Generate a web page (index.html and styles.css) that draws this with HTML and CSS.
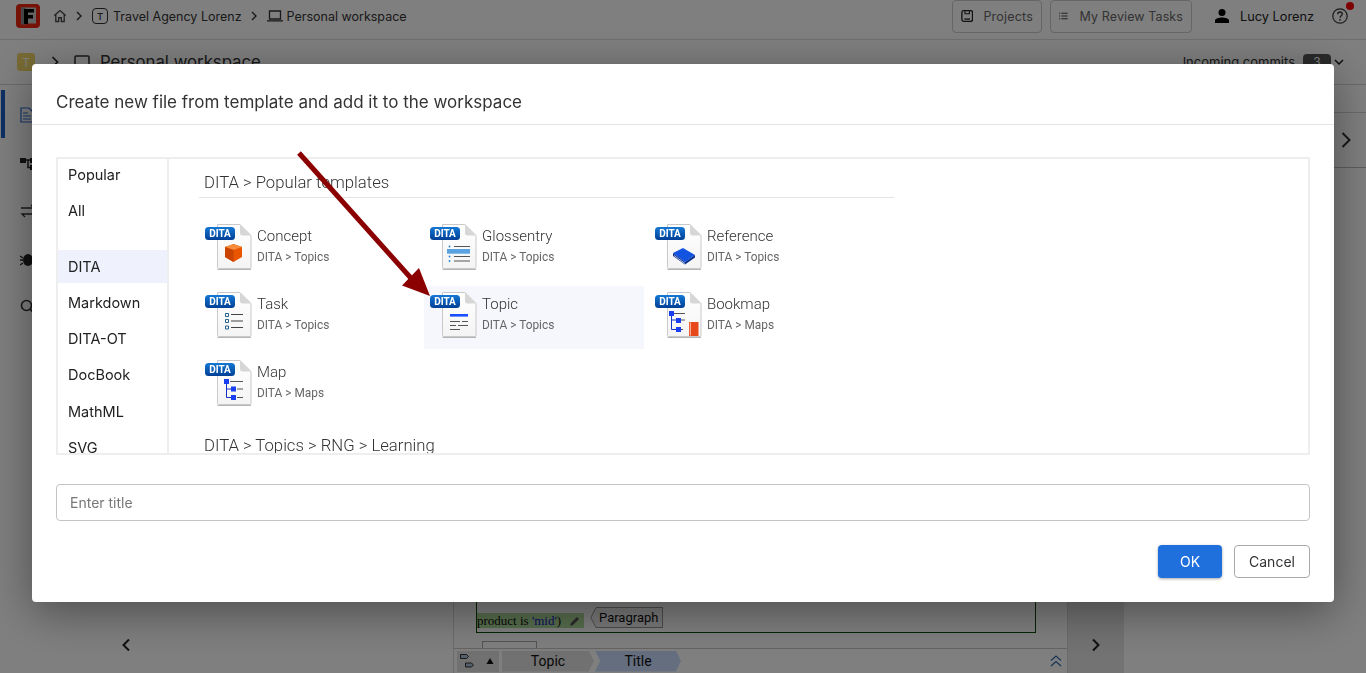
FILE: index.html
```html
<!DOCTYPE html>
<html lang="en">
<head>
<meta charset="utf-8">
<title>Create new file from template</title>
<link rel="stylesheet" href="styles.css">
</head>
<body>
<svg class="defs" aria-hidden="true">
  <defs>
    <linearGradient id="badge" x1="0" y1="0" x2="0" y2="1">
      <stop offset="0" stop-color="#1478d4"/>
      <stop offset="1" stop-color="#003f96"/>
    </linearGradient>
    <linearGradient id="page" x1="0" y1="0" x2="0" y2="1">
      <stop offset="0" stop-color="#ffffff"/>
      <stop offset="1" stop-color="#f4f4f4"/>
    </linearGradient>
    <symbol id="doc" viewBox="0 0 47 47">
      <path d="M12.500 .5H35L46 11.500V43.500Q46 44.500 45 44.500H13.500Q12.500 44.500 12.500 43.500Z" fill="url(#page)" stroke="#c9c9c9"/>
      <path d="M12.500 45.500H46" stroke="#b5b5b5" stroke-width="1"/>
      <path d="M35 .5L46 11.500H37.500Q35 11.500 35 9Z" fill="#d6d6d6"/>
      <rect x="0" y="3" width="30" height="13" rx="3.500" fill="url(#badge)"/>
      <text x="15" y="13.200" class="dita">DITA</text>
    </symbol>
  </defs>
</svg>

<div class="app">
  <header class="topbar">
    <svg class="logo" viewBox="0 0 24 24" width="24" height="24">
      <rect width="24" height="24" rx="4" fill="#ee2410"/>
      <rect x="5" y="3.500" width="15" height="16" fill="#c8c8c8"/>
      <rect x="5" y="3.500" width="5" height="17" fill="#8a8a8a"/>
      <path d="M8 5H18V8.500H12V11H17V14.500H12V20H8Z" fill="#000"/>
    </svg>
    <svg class="ico home" viewBox="0 0 16 16" width="14" height="16"><path d="M1.500 7.500L8 1.800l6.500 5.700M3.200 6.500v7.800h3.300V10h3v4.300h3.300V6.500" fill="none" stroke="#444" stroke-width="1.500"/></svg>
    <svg class="chev" viewBox="0 0 8 10" width="8" height="10"><path d="M2 1l4 4-4 4" fill="none" stroke="#333" stroke-width="1.400"/></svg>
    <span class="tbox">T</span>
    <span class="crumb">Travel Agency Lorenz</span>
    <svg class="chev" viewBox="0 0 8 10" width="8" height="10"><path d="M2 1l4 4-4 4" fill="none" stroke="#333" stroke-width="1.400"/></svg>
    <svg class="ico laptop" viewBox="0 0 16 12" width="16" height="12"><path d="M2.500 1h11v8h-11z" fill="none" stroke="#333" stroke-width="1.300"/><path d="M0 10.200h16v1.300H0z" fill="#333"/></svg>
    <span class="crumb">Personal workspace</span>
    <div class="spring"></div>
    <div class="topbtn btn-projects">
      <svg viewBox="0 0 14 14" width="14" height="14"><rect x="1" y="1" width="12" height="12" rx="2" fill="none" stroke="#222" stroke-width="1.500"/><path d="M4.500 1v3.500h5V1M4.500 9.500v1h5v-1" fill="none" stroke="#222" stroke-width="1.200"/></svg>
      <span>Projects</span>
    </div>
    <div class="topbtn btn-tasks">
      <svg viewBox="0 0 14 12" width="13" height="12"><path d="M0 1.500h2M0 6h2M0 10.500h2M4 1.500h10M4 6h10M4 10.500h10" stroke="#333" stroke-width="1.500"/></svg>
      <span>My Review Tasks</span>
    </div>
    <svg class="user" viewBox="0 0 14 14" width="14" height="14"><circle cx="7" cy="3.500" r="3.500" fill="#000"/><path d="M0 14v-2.500C0 9.500 4 8.500 7 8.500s7 1 7 3V14z" fill="#000"/></svg>
    <span class="username">Lucy Lorenz</span>
    <div class="help">
      <svg viewBox="0 0 16 16" width="16" height="16"><circle cx="8" cy="8" r="7.200" fill="none" stroke="#333" stroke-width="1.200"/><path d="M5.800 6.200C5.800 4.800 6.800 4 8 4s2.300.8 2.300 2.100C10.300 7.800 8 7.800 8 9.700" fill="none" stroke="#333" stroke-width="1.300"/><circle cx="8" cy="11.800" r=".9" fill="#333"/></svg>
      <i class="dot"></i>
    </div>
  </header>

  <div class="subbar">
    <span class="tsquare">T</span>
    <svg class="subchev" viewBox="0 0 8 12" width="8" height="12"><path d="M1.500 1l5 5-5 5" fill="none" stroke="#222" stroke-width="1.600"/></svg>
    <svg class="monitor" viewBox="0 0 16 14" width="16" height="14"><rect x="1" y="1" width="14" height="10" rx="1" fill="none" stroke="#333" stroke-width="1.500"/></svg>
    <span class="subtitle">Personal workspace</span>
    <div class="spring"></div>
    <span class="commits">Incoming commits</span>
    <span class="count">3</span>
    <svg class="cchev" viewBox="0 0 10 6" width="10" height="6"><path d="M1 1l4 4 4-4" fill="none" stroke="#111" stroke-width="1.400"/></svg>
  </div>

  <div class="work">
    <nav class="rail">
      <i class="accent"></i>
      <svg class="rail-ico" viewBox="0 0 14 16" width="14" height="16"><path d="M1 1h8l4 4v10H1zM3 6h5M3 9h8M3 12h8" fill="none" stroke="#2a6cd6" stroke-width="1.200"/></svg>
      <svg class="rail-ico" viewBox="0 0 16 16" width="16" height="16"><path d="M0 3h6v5H0zM10 3h6v5h-6zM10 10h6v5h-6z" fill="#222"/><path d="M6 5h4M8 5v7.500h2" stroke="#222" stroke-width="1.500" fill="none"/></svg>
      <svg class="rail-ico" viewBox="0 0 16 16" width="16" height="16"><path d="M1 5h13l-3-3M15 11H2l3 3" fill="none" stroke="#333" stroke-width="1.300"/></svg>
      <svg class="rail-ico" viewBox="0 0 16 16" width="16" height="16"><ellipse cx="8" cy="9" rx="5" ry="6" fill="#222"/><path d="M0 5l3 2M16 5l-3 2M0 9h3M16 9h-3M0 14l3-2M16 14l-3-2" stroke="#222" stroke-width="1.400"/></svg>
      <svg class="rail-ico" viewBox="0 0 16 16" width="16" height="16"><circle cx="6.500" cy="6.500" r="5" fill="none" stroke="#333" stroke-width="1.600"/><path d="M10 10l5 5" stroke="#333" stroke-width="1.800"/></svg>
    </nav>
    <aside class="leftpanel">
      <svg viewBox="0 0 10 14" width="10" height="14"><path d="M8 1.500L2.500 7 8 12.500" fill="none" stroke="#222" stroke-width="2"/></svg>
    </aside>
    <div class="gap"></div>
    <section class="editor">
      <div class="editor-body">
        <div class="green-box">
          <div class="para-row">
            <span class="condition"><span class="cond-text">product is <b>'mid'</b>)</span><svg viewBox="0 0 12 12" width="12" height="12"><path d="M1 11l1-3 6-6 2 2-6 6z" fill="#555"/></svg></span>
            <span class="tag"><svg viewBox="0 0 7 21" width="7" height="21"><path d="M7 .5H6L.8 10.500 6 20.500H7" fill="#f2f2f2" stroke="#999"/></svg><span class="tag-label">Paragraph</span></span>
          </div>
        </div>
        <i class="tag2"></i>
      </div>
      <div class="crumbs">
        <div class="crumb-tools">
          <svg viewBox="0 0 20 14" width="20" height="14"><path d="M.500 .5h6l2 2-2 2h-6zM5.500 9h6l2 2-2 2h-6z" fill="#a7c0d8" stroke="#333"/></svg>
          <svg viewBox="0 0 8 8" width="8" height="8"><path d="M4 1l3.500 6H.500z" fill="#111"/></svg>
        </div>
        <span class="seg seg-topic">Topic</span>
        <span class="seg seg-title">Title</span>
        <div class="spring"></div>
        <svg class="dchev" viewBox="0 0 12 12" width="12" height="12"><path d="M1 5.500L6 1l5 4.500M1 11l5-4.500 5 4.500" fill="none" stroke="#2f6fa8" stroke-width="1.300"/></svg>
      </div>
    </section>
    <aside class="rightstrip">
      <svg viewBox="0 0 10 14" width="10" height="14"><path d="M2 1.500L7.500 7 2 12.500" fill="none" stroke="#222" stroke-width="2"/></svg>
    </aside>
    <aside class="farpanel">
      <div class="far-head">
        <svg viewBox="0 0 10 16" width="10" height="16"><path d="M1.500 1l7 7-7 7" fill="none" stroke="#333" stroke-width="2"/></svg>
      </div>
    </aside>
  </div>
</div>

<div class="scrim">
  <div class="modal">
    <div class="modal-head">Create new file from template and add it to the workspace</div>
    <div class="modal-body">
      <div class="picker">
        <ul class="cats">
          <li>Popular</li>
          <li class="cat-gap">All</li>
          <li class="selected">DITA</li>
          <li>Markdown</li>
          <li>DITA-OT</li>
          <li>DocBook</li>
          <li class="cat-late">MathML</li>
          <li>SVG</li>
        </ul>
        <div class="templates">
          <h3 class="group">DITA &gt; Popular templates</h3>
          <div class="grid">
            <div class="tpl">
              <svg class="tpl-ico" viewBox="0 0 47 47"><use href="#doc"/>
                <path d="M28.500 20L37 23V33L28.500 38 20 33V23Z" fill="#ea5600"/><path d="M20 23L28.500 20 37 23 28.500 26Z" fill="#f78c3c"/><path d="M28.500 26V38L20 33V23Z" fill="#c84400"/></svg>
              <div class="tpl-text"><b>Concept</b><small>DITA &gt; Topics</small></div>
            </div>
            <div class="tpl">
              <svg class="tpl-ico" viewBox="0 0 47 47"><use href="#doc"/>
                <rect x="17" y="25" width="23" height="4.700" fill="#5ba3e0"/><path d="M24 22.500h16M24 32.500h16M24 37h16" stroke="#555"/><circle cx="19.500" cy="22.500" r=".9" fill="#1f7fd8"/><circle cx="19.500" cy="32.500" r=".9" fill="#1f7fd8"/><circle cx="19.500" cy="37" r=".9" fill="#1f7fd8"/></svg>
              <div class="tpl-text"><b>Glossentry</b><small>DITA &gt; Topics</small></div>
            </div>
            <div class="tpl">
              <svg class="tpl-ico" viewBox="0 0 47 47"><use href="#doc"/>
                <path d="M18 29l10-5 12 7-10 7z" fill="#1254e0"/><path d="M18 29v3l12 8.500 10-7V31l-10 7z" fill="#0a2f8f"/><path d="M19 31.500l11 8" stroke="#d8e4ff" stroke-width=".8"/></svg>
              <div class="tpl-text"><b>Reference</b><small>DITA &gt; Topics</small></div>
            </div>
            <div class="tpl">
              <svg class="tpl-ico" viewBox="0 0 47 47"><use href="#doc"/>
                <path d="M20.500 21.500h3v3h-3zM20.500 27.500h3v3h-3zM20.500 34h3v3h-3z" fill="none" stroke="#24618f"/><path d="M26 22.500h12M26 29h12M26 35.500h12" stroke="#444"/></svg>
              <div class="tpl-text"><b>Task</b><small>DITA &gt; Topics</small></div>
            </div>
            <div class="tpl hovered">
              <svg class="tpl-ico" viewBox="0 0 47 47"><use href="#doc"/>
                <rect x="20" y="22" width="18" height="2.600" fill="#1a4fff"/><path d="M20 29.500h10M32 29.500h6M20 33.500h6M28 33.500h10M20 37.500h10" stroke="#555"/></svg>
              <div class="tpl-text"><b>Topic</b><small>DITA &gt; Topics</small></div>
            </div>
            <div class="tpl">
              <svg class="tpl-ico" viewBox="0 0 47 47"><use href="#doc"/>
                <path d="M16.500 22v15.500H21M16.500 28H21" fill="none" stroke="#1432c8"/><path d="M19 21.500h11M26 28h4M26 37.500h2" stroke="#555"/><rect x="14" y="19" width="5" height="5" fill="#1a3ff0"/><rect x="21" y="26" width="5" height="5" fill="#1a3ff0"/><rect x="21" y="35" width="5" height="5" fill="#1a3ff0"/><rect x="34" y="30" width="9.500" height="14" fill="#e8491a"/><path d="M35.300 30.500V43.500" stroke="#fff" stroke-width=".7"/></svg>
              <div class="tpl-text"><b>Bookmap</b><small>DITA &gt; Maps</small></div>
            </div>
            <div class="tpl">
              <svg class="tpl-ico" viewBox="0 0 47 47"><use href="#doc"/>
                <path d="M21.500 22v15.500H27M21.500 29H27" fill="none" stroke="#1432c8"/><path d="M25 21.500h13M32 29h6M32 37.500h6" stroke="#555"/><rect x="19" y="19" width="5" height="5" fill="#1a3ff0"/><rect x="26" y="26.500" width="5" height="5" fill="#1a3ff0"/><rect x="26" y="35" width="5" height="5" fill="#1a3ff0"/></svg>
              <div class="tpl-text"><b>Map</b><small>DITA &gt; Maps</small></div>
            </div>
          </div>
          <h3 class="group group-next">DITA &gt; Topics &gt; RNG &gt; Learning</h3>
        </div>
      </div>
      <input class="title-input" type="text" placeholder="Enter title">
    </div>
    <div class="modal-foot">
      <button class="btn btn-ok" type="button">OK</button>
      <button class="btn btn-cancel" type="button">Cancel</button>
    </div>
  </div>
  <svg class="arrow" viewBox="0 0 140 150" width="140" height="150"><path d="M2 2L121 135" stroke="#8b0000" stroke-width="5" fill="none"/><path d="M133 145L105 134.500 122 117Z" fill="#8b0000"/></svg>
</div>
</body>
</html>
```
FILE: styles.css
```css
* { box-sizing: border-box; }
html, body { margin: 0; height: 100%; }
body { font-family: Inter, "Liberation Sans", sans-serif; color: #333; background: #fff; overflow: hidden; }
.defs { position: absolute; width: 0; height: 0; }
.dita { font-family: Roboto, "Liberation Sans", sans-serif; font-size: 10px; font-weight: 700; fill: #fff; text-anchor: middle; }

.app { height: 673px; display: flex; flex-direction: column; }
.spring { flex: 1; }

.topbar { height: 40px; flex: none; display: flex; align-items: center; padding: 0 18px 7px 16px; border-bottom: 1px solid #dcdcdc; font-size: 12.500px; }
.logo { flex: none; margin-right: 13px; }
.chev { flex: none; margin: 0 8px; }
.ico { flex: none; }
.tbox { width: 16px; height: 16px; border: 1px solid #333; border-radius: 4px; font-size: 9.500px; font-weight: 500; display: flex; align-items: center; justify-content: center; margin: 0 5px 0 1px; flex: none; }
.laptop { margin: 0 4px 0 1px; }
.crumb { white-space: nowrap; }
.topbtn { height: 33px; border: 1px solid #ccc; border-radius: 4px; display: flex; align-items: center; gap: 10px; padding: 0 8px; color: #666; letter-spacing: .2px; white-space: nowrap; }
.btn-projects { width: 90px; }
.btn-tasks { width: 142px; margin-left: 8px; gap: 12px; letter-spacing: .1px; }
.user { margin-left: 23px; }
.username { margin-left: 11px; color: #222; white-space: nowrap; font-size: 12.750px; }
.help { margin-left: 18px; position: relative; width: 16px; height: 16px; }
.help svg { display: block; }
.dot { position: absolute; right: -6px; top: -6px; width: 8px; height: 8px; border-radius: 50%; background: #ff0000; }

.subbar { height: 45px; flex: none; display: flex; align-items: center; padding: 0 22px 0 17px; border-bottom: 1px solid #d4d4d4; }
.tsquare { width: 18px; height: 18px; border-radius: 3px; background: #f0d668; color: #fff; font-size: 12px; display: flex; align-items: center; justify-content: center; }
.subchev { margin-left: 16px; }
.monitor { margin-left: 15px; }
.subtitle { margin-left: 10px; font-size: 16.750px; color: #333; }
.commits { font-size: 13px; }
.count { margin-left: 8px; width: 28px; height: 17px; border-radius: 4px; background: #555; color: #fff; text-align: center; font-size: 12px; }
.cchev { margin-left: 3px; }

.work { flex: 1; display: flex; min-height: 0; }
.rail { width: 45px; flex: none; padding: 22px 0 0 20px; display: flex; flex-direction: column; gap: 32px; position: relative; }
.accent { position: absolute; left: 1px; top: 5px; width: 4px; height: 48px; background: #1a5fc8; }
.rail-ico { flex: none; }
.leftpanel { width: 108px; flex: none; display: flex; justify-content: flex-end; align-items: flex-end; padding: 0 22px 21px 0; }
.gap { flex: 1; }
.editor { width: 615px; flex: none; border-left: 1px solid #d8d8d8; border-right: 1px solid #d8d8d8; display: flex; flex-direction: column; justify-content: flex-end; }
.editor-body { flex: 1; overflow: hidden; display: flex; flex-direction: column; justify-content: flex-end; padding-left: 18px; }
.green-box { width: 560px; margin-left: 4px; border: 1px solid #0a4a0a; border-top: 0; height: 60px; flex: none; display: flex; align-items: flex-end; padding-bottom: 4px; margin-bottom: 8px; }
.para-row { display: flex; align-items: flex-end; gap: 6px; font-family: "Liberation Serif", serif; font-size: 13px; color: #111; }
.condition { background: #aedb9a; display: flex; align-items: center; gap: 8px; width: 107px; height: 15px; white-space: nowrap; line-height: 15px; }
.cond-text { display: block; }
.condition b { font-weight: 400; color: #1818c8; }
.tag { display: flex; font-family: Roboto, sans-serif; font-size: 13px; height: 21px; }
.tag svg { display: block; flex: none; }
.tag-label { border: 1px solid #999; border-left: 0; padding: 0 4px 0 2px; height: 21px; line-height: 19px; background: #f2f2f2; }
.tag2 { display: block; align-self: flex-start; height: 7px; width: 55px; margin-left: 10px; border: 1px solid #aaa; border-bottom: 0; flex: none; }
.crumbs { height: 25px; flex: none; border-top: 1px solid #c8c8c8; display: flex; align-items: center; padding: 0 5px 0 3px; font-family: Roboto, sans-serif; font-size: 14px; color: #111; }
.crumb-tools { width: 42px; height: 21px; background: #e2e2e2; display: flex; align-items: center; gap: 6px; padding-left: 3px; }
.seg { height: 21px; display: flex; align-items: center; justify-content: center; }
.seg-topic { width: 92px; margin-left: 3px; background: #e2e2e2; clip-path: polygon(0 0, 94% 0, 100% 50%, 94% 100%, 0 100%); }
.seg-title { width: 86px; margin-left: 1px; background: #c8dcff; clip-path: polygon(0 0, 94% 0, 100% 50%, 94% 100%, 0 100%, 6% 50%); }
.rightstrip { width: 56px; flex: none; background: #e6e6e6; display: flex; align-items: flex-end; justify-content: center; padding-bottom: 21px; }
.farpanel { width: 242px; flex: none; display: flex; flex-direction: column; }
.far-head { height: 56px; margin-top: 27px; border-top: 1px solid #d4d4d4; border-bottom: 1px solid #bbb; display: flex; align-items: center; justify-content: flex-end; padding-right: 15px; }

.scrim { position: fixed; inset: 0; background: rgba(0, 0, 0, .5); display: flex; padding: 64px 32px 71px; }
.modal { flex: 1; background: #fff; border-radius: 4px; box-shadow: 0 10px 45px rgba(0, 0, 0, .4); display: flex; flex-direction: column; }
.modal-head { height: 61px; flex: none; border-bottom: 1px solid #e4e4e4; padding: 16px 24px 0; display: flex; align-items: center; font-size: 17px; color: #333; }
.modal-body { padding: 32px 24px 0; }
.picker { height: 298px; border: 2px solid #eee; display: flex; overflow: hidden; }
.cats { width: 111px; flex: none; border-right: 2px solid #eee; margin: 0; padding: 0; list-style: none; font-size: 14.500px; color: #222; }
.cats li { height: 33px; margin-bottom: 3px; padding-left: 10px; display: flex; align-items: center; }
.cats li:first-child { margin-top: -1px; }
.cats .cat-gap { margin-bottom: 23px; }
.cats .cat-late { margin-top: 4px; }
.cats .selected { background: #eff1fd; }
.templates { flex: 1; padding-left: 30px; min-width: 0; overflow: hidden; }
.group { width: 695px; margin: 0; padding: 14px 0 5px 5px; font: 300 16.700px/19px Roboto, sans-serif; color: #333; border-bottom: 1px solid #e4e4e4; }
.group-next { border: 0; padding-top: 19px; }
.grid { display: grid; grid-template-columns: repeat(3, 220px); grid-auto-rows: 63px; gap: 5px; margin-top: 20px; }
.tpl { display: flex; padding: 6px 0 0 6px; }
.tpl-ico { width: 47px; height: 47px; flex: none; }
.hovered { background: #f6f7fd; }
.tpl-text { margin-left: 5px; display: flex; flex-direction: column; font-family: Roboto, sans-serif; }
.tpl-text b { font-weight: 300; font-size: 15px; line-height: 20px; color: #333; margin-top: 2px; }
.tpl-text small { font-size: 11.900px; line-height: 16px; margin-top: 3px; color: #666; }
.title-input { display: block; width: 100%; height: 37px; margin-top: 29px; border: 1px solid #c4c4c4; border-radius: 4px; padding: 0 13px; font: 14px Inter, sans-serif; outline: 0; }
.title-input::placeholder { color: #777; }
.modal-foot { display: flex; justify-content: flex-end; gap: 12px; padding: 24px 24px 0; }
.btn { height: 33px; border-radius: 4px; font: 14px Inter, sans-serif; cursor: pointer; }
.btn-ok { width: 64px; background: #1f6fdc; color: #fff; border: 0; box-shadow: 0 1px 3px rgba(0, 0, 0, .35); }
.btn-cancel { width: 76px; background: #fff; color: #333; border: 1px solid #aaa; }
.arrow { position: absolute; left: 297px; top: 151px; }
```
